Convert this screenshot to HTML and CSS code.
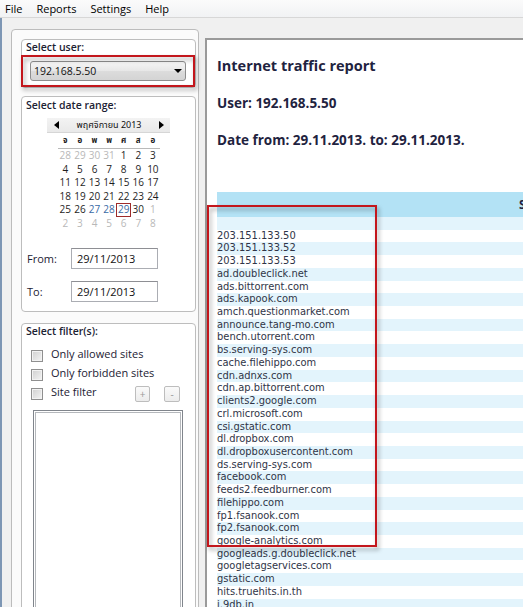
FILE: index.html
```html
<!DOCTYPE html>
<html lang="en">
<head>
<meta charset="utf-8">
<title>Internet traffic report</title>
<link rel="stylesheet" href="styles.css">
</head>
<body>
<div class="menubar">
  <span class="mi mi-file">File</span>
  <span class="mi mi-reports">Reports</span>
  <span class="mi mi-settings">Settings</span>
  <span class="mi mi-help">Help</span>
</div>
<div class="client">
  <div class="leftpanel">
    <div class="gb gb-user">
      <div class="gb-title">Select user:</div>
      <div class="combo">
        <span class="combo-text">192.168.5.50</span>
        <svg class="combo-arrow" width="8" height="4" viewBox="0 0 8 4"><polygon points="0,0 8,0 4,4" fill="#000"/></svg>
      </div>
    </div>
    <div class="gb gb-date">
      <div class="gb-title">Select date range:</div>
      <div class="cal">
        <div class="cal-head">
          <svg class="cal-arrow" width="5" height="8" viewBox="0 0 5 8"><polygon points="5,0 5,8 0,4" fill="#000"/></svg>
          <span class="cal-month">พฤศจิกายน 2013</span>
          <svg class="cal-arrow" width="5" height="8" viewBox="0 0 5 8"><polygon points="0,0 0,8 5,4" fill="#000"/></svg>
        </div>
        <div class="cal-days">
          <span>จ</span><span>อ</span><span>พ</span><span>พ</span><span>ศ</span><span>ส</span><span>อ</span>
        </div>
        <div class="cal-grid">
          <span class="d-other">28</span><span class="d-other">29</span><span class="d-other">30</span><span class="d-other">31</span><span>1</span><span>2</span><span>3</span>
          <span>4</span><span>5</span><span>6</span><span>7</span><span>8</span><span>9</span><span>10</span>
          <span>11</span><span>12</span><span>13</span><span>14</span><span>15</span><span>16</span><span>17</span>
          <span>18</span><span>19</span><span>20</span><span>21</span><span>22</span><span>23</span><span>24</span>
          <span>25</span><span>26</span><span class="d-mark">27</span><span class="d-mark">28</span><span class="d-mark d-sel">29</span><span>30</span><span class="d-other">1</span>
          <span class="d-other">2</span><span class="d-other">3</span><span class="d-other">4</span><span class="d-other">5</span><span class="d-other">6</span><span class="d-other">7</span><span class="d-other">8</span>
        </div>
      </div>
      <div class="field field-from">
        <span class="field-label">From:</span>
        <div class="textbox">29/11/2013</div>
      </div>
      <div class="field field-to">
        <span class="field-label">To:</span>
        <div class="textbox">29/11/2013</div>
      </div>
    </div>
    <div class="gb gb-filter">
      <div class="gb-title">Select filter(s):</div>
      <div class="check-row check-first">
        <span class="checkbox"></span><span class="check-label">Only allowed sites</span>
      </div>
      <div class="check-row">
        <span class="checkbox"></span><span class="check-label">Only forbidden sites</span>
      </div>
      <div class="check-row">
        <span class="checkbox"></span><span class="check-label">Site filter</span>
        <span class="mini-btn mini-plus">+</span><span class="mini-btn mini-minus">-</span>
      </div>
      <div class="listbox"></div>
    </div>
  </div>
  <div class="report">
    <h1 class="report-title">Internet traffic report</h1>
    <p class="report-line report-user">User: 192.168.5.50</p>
    <p class="report-line report-date">Date from: 29.11.2013. to: 29.11.2013.</p>
    <div class="table">
      <div class="thead">Site</div>
      <div class="rows">
        <div class="row"></div>
        <div class="row">203.151.133.50</div>
        <div class="row">203.151.133.52</div>
        <div class="row">203.151.133.53</div>
        <div class="row">ad.doubleclick.net</div>
        <div class="row">ads.bittorrent.com</div>
        <div class="row">ads.kapook.com</div>
        <div class="row">amch.questionmarket.com</div>
        <div class="row">announce.tang-mo.com</div>
        <div class="row">bench.utorrent.com</div>
        <div class="row">bs.serving-sys.com</div>
        <div class="row">cache.filehippo.com</div>
        <div class="row">cdn.adnxs.com</div>
        <div class="row">cdn.ap.bittorrent.com</div>
        <div class="row">clients2.google.com</div>
        <div class="row">crl.microsoft.com</div>
        <div class="row">csi.gstatic.com</div>
        <div class="row">dl.dropbox.com</div>
        <div class="row">dl.dropboxusercontent.com</div>
        <div class="row">ds.serving-sys.com</div>
        <div class="row">facebook.com</div>
        <div class="row">feeds2.feedburner.com</div>
        <div class="row">filehippo.com</div>
        <div class="row">fp1.fsanook.com</div>
        <div class="row">fp2.fsanook.com</div>
        <div class="row">google-analytics.com</div>
        <div class="row">googleads.g.doubleclick.net</div>
        <div class="row">googletagservices.com</div>
        <div class="row">gstatic.com</div>
        <div class="row">hits.truehits.in.th</div>
        <div class="row">i.9db.in</div>
      </div>
    </div>
  </div>
</div>
<div class="callout callout-user"></div>
<div class="callout callout-list"></div>
</body>
</html>
```

FILE: styles.css
```css
html, body {
  margin: 0;
  padding: 0;
}
body {
  width: 523px;
  height: 607px;
  overflow: hidden;
  position: relative;
  background: #f0f0f0;
  font-family: "Open Sans", "Noto Sans", "Noto Sans Thai", sans-serif;
  color: #1b1b1b;
}

/* menu bar */
.menubar {
  height: 17px;
  border-bottom: 1px solid #d7d7d7;
  background: linear-gradient(#fbfbfb, #f1f2f4);
  display: flex;
  align-items: center;
  padding-left: 5px;
  gap: 14px;
  font-size: 11px;
  line-height: 17px;
  color: #000;
}

/* client area */
.client {
  height: 589px;
  box-sizing: border-box;
  border-left: 2px solid #7d96b4;
  padding: 11px 0 0 9px;
  display: flex;
  align-items: flex-start;
  background: #f0f0f0;
}

.leftpanel {
  flex-shrink: 0;
  width: 188px;
  height: 620px;
  box-sizing: border-box;
  border: 1px solid #bcbcbc;
  border-radius: 4px;
  background: #fbfbfb;
  padding: 9px 2px 0 9px;
}

.gb {
  box-sizing: border-box;
  border: 1px solid #bdbdbd;
  border-radius: 4px;
  background: #fff;
}
.gb-title {
  font-size: 10.5px;
  font-weight: 600;
  line-height: 14px;
  padding-left: 4px;
  color: #1c2233;
}
.gb-user {
  height: 49px;
}
.gb-date {
  height: 216px;
  margin-top: 8px;
}
.gb-date .gb-title {
  margin-top: 1px;
}
.gb-filter {
  height: 320px;
  margin-top: 11px;
}

/* combo box */
.combo {
  margin: 7px 0 0 8px;
  width: 156px;
  height: 20px;
  box-sizing: border-box;
  border: 1px solid #8e8e8e;
  border-radius: 3px;
  background: linear-gradient(#f5f5f5, #e7e7e7 50%, #dcdcdc 51%, #d4d4d4);
  display: flex;
  align-items: center;
  padding: 0 3px 0 3px;
  font-size: 10.5px;
  color: #111;
}
.combo-text {
  flex: 1;
}
.combo-arrow {
  display: block;
}

/* calendar */
.cal {
  margin: 6px 0 0 25px;
  width: 123px;
}
.cal-head {
  height: 15px;
  box-sizing: border-box;
  background: linear-gradient(#f3f3f3, #e9e9e9);
  border-bottom: 1px solid #d6d6d6;
  display: flex;
  align-items: center;
  justify-content: space-between;
  padding: 0 6px 0 7px;
}
.cal-month {
  font-family: "Noto Sans Thai", "Noto Sans Thai UI", "Noto Sans", sans-serif;
  font-size: 9px;
  line-height: 14px;
  color: #111;
}
.cal-arrow {
  display: block;
}
.cal-days,
.cal-grid {
  margin-left: 11px;
  width: 102px;
  display: grid;
  grid-template-columns: repeat(7, 14.6px);
  justify-items: center;
}
.cal-days {
  margin-top: 1px;
  height: 14px;
  border-bottom: 1px solid #b9b9b9;
  font-family: "Noto Sans Thai", "Noto Sans Thai UI", "Noto Sans", sans-serif;
  font-size: 8px;
  line-height: 14px;
  font-weight: 700;
  color: #222;
}
.cal-grid {
  grid-auto-rows: 13.6px;
  font-size: 10px;
  line-height: 13.6px;
  color: #1e1e1e;
}
.cal-grid span {
  width: 14.6px;
  text-align: center;
  box-sizing: border-box;
}
.d-other {
  color: #b8b8b8;
}
.d-mark {
  color: #3a6aa6;
}
.d-sel {
  border: 1px solid #9e2b2b;
  line-height: 11.6px;
}

/* from / to */
.field {
  display: flex;
  align-items: center;
  height: 21px;
}
.field-from {
  margin-top: 17px;
}
.field-to {
  margin-top: 12px;
}
.field-label {
  width: 44px;
  padding-left: 5px;
  font-size: 11px;
  color: #1c2233;
}
.textbox {
  width: 87px;
  height: 21px;
  box-sizing: border-box;
  border: 1px solid #abadb3;
  border-top-color: #8e8f94;
  background: #fff;
  padding-left: 5px;
  font-size: 11px;
  line-height: 19px;
  color: #111;
}

/* filters */
.check-row {
  display: flex;
  align-items: center;
  height: 19px;
}
.check-first {
  margin-top: 8px;
}
.checkbox {
  width: 12px;
  height: 12px;
  box-sizing: border-box;
  margin-left: 9px;
  border: 1px solid #8f8f8f;
  background: linear-gradient(135deg, #cfcfcf, #f4f4f4);
  box-shadow: inset 0 0 0 1px #f2f2f2;
}
.check-label {
  margin-left: 8px;
  font-size: 11px;
  line-height: 14px;
  margin-top: -3px;
  color: #1c2233;
}
.mini-btn {
  width: 15px;
  height: 16px;
  box-sizing: border-box;
  border: 1px solid #bdbdbd;
  border-radius: 2px;
  background: linear-gradient(#fafafa, #ececec);
  font-size: 10px;
  line-height: 14px;
  text-align: center;
  color: #9a9a9a;
}
.mini-plus {
  margin-left: auto;
}
.mini-minus {
  width: 16px;
  margin-left: 14px;
  margin-right: 15px;
}
.listbox {
  margin: 7px 0 0 11px;
  width: 150px;
  height: 300px;
  box-sizing: border-box;
  border: 1px solid #80858c;
  background: #fff;
  box-shadow: inset 0 0 0 1px #fff, inset 0 0 0 2px #b5b8bc;
}

/* report panel */
.report {
  flex-shrink: 0;
  margin: 9px 0 0 6px;
  width: 340px;
  height: 600px;
  box-sizing: border-box;
  border-top: 2px solid #9a9a9a;
  border-left: 2px solid #9a9a9a;
  background: #fff;
  padding-left: 10px;
  color: #1f2340;
}
.report-title {
  margin: 16px 0 0 0;
  font-size: 14.5px;
  line-height: 20px;
  font-weight: 700;
}
.report-line {
  margin: 0;
  font-size: 13.5px;
  line-height: 18px;
  font-weight: 700;
}
.report-user {
  margin-top: 18px;
}
.report-date {
  margin-top: 19px;
}
.table {
  margin-top: 43px;
}
.thead {
  height: 25px;
  background: #b3e2f5;
  padding-left: 302px;
  font-size: 12px;
  font-weight: 700;
  line-height: 25px;
  color: #1f2340;
}
.row {
  height: 12.72px;
  line-height: 12.72px;
  font-family: "DejaVu Sans", sans-serif;
  font-stretch: condensed;
  font-size: 11px;
  color: #2f3447;
  white-space: nowrap;
  background: #fff;
}
.row:nth-child(odd) {
  background: #e3f4fc;
}

/* annotation boxes */
.callout {
  position: absolute;
  box-sizing: border-box;
  border: 2px solid #c3161c;
  filter: drop-shadow(2px 3px 2px rgba(0, 0, 0, 0.35));
}
.callout-user {
  left: 21px;
  top: 55px;
  width: 174px;
  height: 32px;
}
.callout-list {
  left: 207px;
  top: 205px;
  width: 170px;
  height: 342px;
}
```
